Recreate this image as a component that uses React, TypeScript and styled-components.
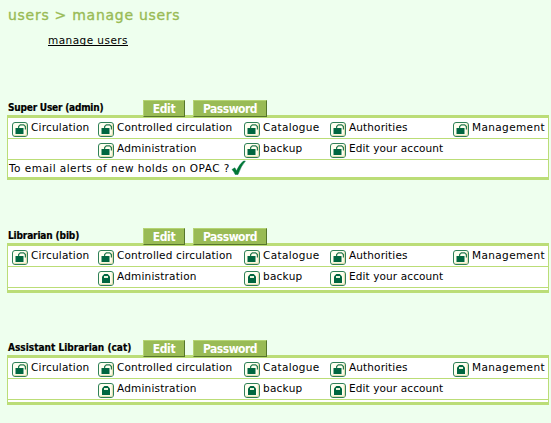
import React from 'react';
import styled, { createGlobalStyle } from 'styled-components';

const GlobalStyle = createGlobalStyle`
  body {
    margin: 0;
    background: #eeffee;
    color: #000;
    font-family: Verdana, "DejaVu Sans", sans-serif;
    font-size: 10.5px;
  }
`;

const Page = styled.main`
  width: 551px;
  height: 423px;
  overflow: hidden;
  box-sizing: border-box;
  padding: 6px 2px 0 7px;
`;

const Heading = styled.h1`
  margin: 0 0 0 1px;
  height: 18px;
  line-height: 18px;
  font-size: 14px;
  font-weight: 400;
  letter-spacing: 0.72px;
  color: #99bb55;
  -webkit-text-stroke: 0.35px #99bb55;
  white-space: nowrap;
`;

const SubLink = styled.a`
  display: block;
  width: 80px;
  height: 13px;
  margin: 9px 0 0 41px;
  line-height: 14px;
  letter-spacing: 0.45px;
  white-space: nowrap;
  border-bottom: 1px solid #000;
  box-sizing: border-box;
`;

const Section = styled.section<{ $gap: number }>`
  margin-top: ${(p) => p.$gap}px;
`;

const SectionHead = styled.header`
  display: flex;
  height: 15px;
`;

const UserName = styled.h2<{ $spacing: number }>`
  width: 136px;
  margin: 0;
  padding: 2px 0 0 1px;
  box-sizing: border-box;
  line-height: 12px;
  font-size: 10px;
  font-weight: 700;
  font-family: "DejaVu Sans Condensed", "DejaVu Sans", sans-serif;
  font-stretch: condensed;
  letter-spacing: ${(p) => p.$spacing}px;
  -webkit-text-stroke: 0.2px #000;
  white-space: nowrap;
`;

const Button = styled.button<{ $width: number; $spacing: number }>`
  width: ${(p) => p.$width}px;
  height: 17px;
  margin: 0 8px 0 0;
  padding: 1px 0 0;
  z-index: 1;
  border: 1px solid #b5d474;
  border-right-color: #55752b;
  border-bottom-color: #55752b;
  background: #99bb55;
  color: #fff;
  font: 700 12px/14px "DejaVu Sans Condensed", "DejaVu Sans", sans-serif;
  font-stretch: condensed;
  letter-spacing: ${(p) => p.$spacing}px;
  white-space: nowrap;
`;

const Panel = styled.div`
  border: 1px solid #bbdd77;
  border-width: 3px 1px;
  background: #fff;
`;

const Row = styled.div`
  display: grid;
  grid-template-columns: 86px 146px 86px 123px 95px;
  height: 20px;
  padding-left: 4px;
  border-bottom: 1px solid #bbdd77;
`;

const Right = styled.div<{ $col: number }>`
  grid-column: ${(p) => p.$col};
  display: flex;
  align-items: flex-start;
  padding-top: 4px;
`;

const Label = styled.span<{ $spacing: number }>`
  margin: -3px 0 0 3px;
  line-height: 16px;
  letter-spacing: ${(p) => p.$spacing}px;
  white-space: nowrap;
`;

const AlertRow = styled.div`
  display: flex;
  height: 17px;
  padding-left: 1px;
  line-height: 17px;
  letter-spacing: 0.46px;
  white-space: nowrap;
`;

const Filler = styled.div`
  height: 2px;
`;

const Glyph = styled.svg`
  display: block;
  flex: none;
`;

const TickGlyph = styled(Glyph)`
  margin-left: 1px;
`;

const LockIcon = ({ open }: { open: boolean }) => (
  <Glyph width="16" height="15" viewBox="0 0 16 15">
    <rect x="0.5" y="0.5" width="15" height="14" rx="2.5" fill="#fffff0" stroke="#2f8058" />
    <path d="M2 13.3h12.3V2" fill="none" stroke="#dcd6a4" />
    {open ? (
      <>
        <path d="M6.6 6V4.6L8.3 2.9h3.4l1.7 1.7V7.5" fill="none" stroke="#287a50" strokeWidth="1.2" />
        <rect x="3.5" y="6" width="8" height="6" fill="#006640" />
      </>
    ) : (
      <>
        <path d="M4 12V5.5L6.3 3h3.4L12 5.5V12z" fill="#006640" />
        <rect x="6" y="5" width="4" height="2" fill="#e7f3db" />
      </>
    )}
  </Glyph>
);

const CheckIcon = () => (
  <TickGlyph width="15" height="16" viewBox="0 0 15 16">
    <path d="M1 9.5L3.8 7.8l1.7 3Q8.5 4 12.5 1H14.4Q10 6 7 14.5H4.2Q3 11.5 1 9.5z" fill="#007832" stroke="#00704a" strokeWidth=".5" />
  </TickGlyph>
);

type RightItem = { name: string; col: number; spacing: number };

const FIRST: RightItem[] = [
  { name: 'Circulation', col: 1, spacing: 0.2 },
  { name: 'Controlled circulation', col: 2, spacing: 0.15 },
  { name: 'Catalogue', col: 3, spacing: 0.36 },
  { name: 'Authorities', col: 4, spacing: 0.12 },
  { name: 'Management', col: 5, spacing: 0.38 },
];

const SECOND: RightItem[] = [
  { name: 'Administration', col: 2, spacing: 0.2 },
  { name: 'backup', col: 3, spacing: 0.25 },
  { name: 'Edit your account', col: 4, spacing: 0.11 },
];

type User = { name: string; spacing: number; gap: number; locked: string[]; alerts?: boolean };

const USERS: User[] = [
  { name: 'Super User (admin)', spacing: -0.2, gap: 54, locked: [], alerts: true },
  { name: 'Librarian (bib)', spacing: -0.13, gap: 48, locked: ['Administration', 'backup', 'Edit your account'] },
  { name: 'Assistant Librarian (cat)', spacing: 0.01, gap: 47, locked: ['Management', 'Administration', 'backup', 'Edit your account'] },
];

const RightsRow = ({ rights, locked }: { rights: RightItem[]; locked: string[] }) => (
  <Row>
    {rights.map((r) => (
      <Right key={r.name} $col={r.col}>
        <LockIcon open={!locked.includes(r.name)} />
        <Label $spacing={r.spacing}>{r.name}</Label>
      </Right>
    ))}
  </Row>
);

export default function App() {
  return (
    <>
      <GlobalStyle />
      <Page>
        <Heading>users &gt; manage users</Heading>
        <SubLink>manage users</SubLink>
        {USERS.map((u) => (
          <Section key={u.name} $gap={u.gap}>
            <SectionHead>
              <UserName $spacing={u.spacing}>{u.name}</UserName>
              <Button $width={42} $spacing={-0.4}>Edit</Button>
              <Button $width={74} $spacing={-0.5}>Password</Button>
            </SectionHead>
            <Panel>
              <RightsRow rights={FIRST} locked={u.locked} />
              <RightsRow rights={SECOND} locked={u.locked} />
              {u.alerts ? (
                <AlertRow>
                  To email alerts of new holds on OPAC ?<CheckIcon />
                </AlertRow>
              ) : (
                <Filler />
              )}
            </Panel>
          </Section>
        ))}
      </Page>
    </>
  );
}
